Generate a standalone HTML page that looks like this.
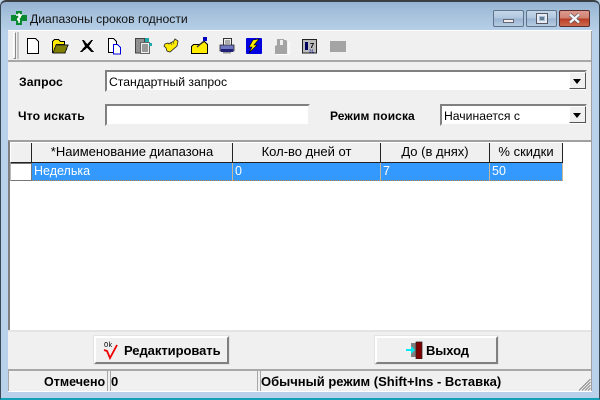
<!DOCTYPE html>
<html><head><meta charset="utf-8"><style>
html,body{margin:0;padding:0;background:#fff}
#w{position:relative;width:600px;height:400px;overflow:hidden;background:#b9d1ea;font-family:"Liberation Sans",sans-serif;font-size:13px;color:#000}
#w div,#w svg,#w span{position:absolute;box-sizing:border-box}
.t{white-space:nowrap;line-height:14px}
.b{font-weight:bold}
.sunk{background:#fff;border:2px solid;border-color:#808080 #f0f0f0 #f0f0f0 #808080}
.arr{background:#f0f0f0;border:1px solid;border-color:#fff #555 #555 #fff;width:17px;height:17px}
.arr:after{content:"";position:absolute;left:3px;top:6px;border:4px solid transparent;border-top:5px solid #000;border-bottom:0}
.hd{background:#f0f0f0;border-right:1px solid #222;border-bottom:1px solid #222;top:143px;height:20px;text-align:center;line-height:18px;white-space:nowrap}
.cell{top:163px;height:18px;background:#3399ff;color:#fff;font-size:12.500px;border-right:1px solid #c9b89a;border-bottom:1px dotted #c08040;line-height:17px;padding-left:2px;white-space:nowrap}
.btn{background:#f0f0f0;border:2px solid;border-color:#fff #808080 #808080 #fff;box-shadow:0 0 0 1px #e4e4e4}
</style></head><body><div id="w">
<div style="left:0;top:0;width:600px;height:400px;border:1px solid #3a4a54;border-bottom:2px solid #12a0b8;border-top:2px solid #3a3f44;border-radius:6px 6px 0 0;background:linear-gradient(#95b3d2 0,#a9c4de 15px,#b9d1ea 31px)"></div>
<svg style="left:9px;top:10px" width="20" height="16" viewBox="0 0 20 16"><path d="M7 1h6v4h5v6h-5v4H7v-4H2V5h5z" fill="#0a8a30"/><path d="M7 5h6M9 5c3 1 3 2 1 3s-2 2 1 3M10 3v10" stroke="#fff" stroke-width="1.400" fill="none"/></svg>
<div class="t" style="left:30px;top:12px;color:#111;font-size:12.200px">Диапазоны сроков годности</div>

<div style="left:493px;top:10px;width:31px;height:17px;border:1px solid #5f7388;border-radius:2px;background:linear-gradient(#c4d6e9 0,#afc6de 50%,#98b2cf 50%,#b6cce3 100%)"></div>
<div style="left:503px;top:19px;width:11px;height:4px;background:#eee;border:1px solid #667"></div>
<div style="left:526px;top:10px;width:31px;height:17px;border:1px solid #5f7388;border-radius:2px;background:linear-gradient(#c4d6e9 0,#afc6de 50%,#98b2cf 50%,#b6cce3 100%)"></div>
<div style="left:537px;top:14px;width:10px;height:9px;border:2px solid #e6ebf1;outline:1px solid #556;background:#667a90;box-shadow:inset 0 0 0 1px #a6bfd9"></div>
<div style="left:559px;top:10px;width:31px;height:17px;border:1px solid #5a2a2a;border-radius:2px;background:linear-gradient(#dc9a8e 0,#d0806f 50%,#b93a22 50%,#cc6a50 100%)"></div>
<svg style="left:568px;top:13px" width="13" height="11" viewBox="0 0 13 11"><path d="M2 1.500l9 8M11 1.500l-9 8" stroke="#556" stroke-width="3.600"/><path d="M2 1.500l9 8M11 1.500l-9 8" stroke="#f4f4f4" stroke-width="2.400"/></svg>

<div style="left:8px;top:30px;width:584px;height:362px;background:#f0f0f0"></div>
<div style="left:591px;top:30px;width:1px;height:362px;background:#a0a0a0"></div>
<div style="left:8px;top:30px;width:584px;height:1px;background:#fff"></div>
<div style="left:8px;top:60px;width:583px;height:2px;background:#a8a8a8"></div>
<div style="left:13px;top:32px;width:3px;height:27px;border:1px solid;border-color:#fff #888 #888 #fff"></div>
<div style="left:17px;top:32px;width:2px;height:27px;background:#c4c4c4"></div>

<svg style="left:24px;top:34px" width="325" height="24" viewBox="24 34 325 24" shape-rendering="crispEdges">
<path d="M27.500 38.500h8l3 3v12h-11z" fill="#fff" stroke="#000"/>
<path d="M52.500 52.500v-11l2-2h4l2 2h4v3h-8l-3 8z" fill="#ffec00" stroke="#000"/><path d="M53 53l3-8h12l-3 8z" fill="#808000" stroke="#222"/>
<path d="M82 40h2l3 4 4-4h2l-4 6 5 6h-3l-4-4-5 4h-2l5-6z" fill="#000"/>
<path d="M108.500 38.500h5l3 3v11h-8z" fill="#fff" stroke="#000"/><path d="M113.500 44.500h4l3 3v6.500h-7z" fill="#fff" stroke="#0000e0"/>
<path d="M135.500 38.500h9v14.500h-9z" fill="#909090" stroke="#444"/><path d="M140.500 42.500h9v11h-9z" fill="#eee" stroke="#666"/><path d="M142 45h6M142 47h6M142 49h6M142 51h6" stroke="#444"/><rect x="145" y="38" width="4" height="4" fill="#20a8a8"/><rect x="149" y="43" width="3" height="3" fill="#20a8a8"/>
</svg>
<svg style="left:160px;top:34px" width="190" height="24" viewBox="160 34 190 24">
<path d="M165 44l3-1 1 1 5-3 1-2 3 2-1 5-7 6-3-1-1-3-2-2z" fill="#ffec00" stroke="#222" stroke-width=".8"/><path d="M170 42l2 3M173 41l1 3" stroke="#554" stroke-width=".7"/>
<path d="M191.500 53.500v-7l2-2h6l5-3 3 3v9z" fill="#ffec00" stroke="#000"/><path d="M197 47l7-6" stroke="#333" stroke-width="1.400"/><rect x="203" y="37" width="4" height="4" fill="#0000c0"/>
<path d="M223.500 45v-6.500h8v6.500" fill="#eee" stroke="#333"/><path d="M225 41h5M225 43h5" stroke="#666"/><path d="M220 45h14v6h-14z" fill="#7078c0" stroke="#223" stroke-width=".8"/><rect x="221" y="49" width="12" height="3" fill="#202078"/><rect x="223" y="52" width="8" height="1.500" fill="#999"/>
<rect x="246" y="38" width="16" height="16" rx="1" fill="#0000e0"/><path d="M259 39l-6 1-4 7h3l-3 6 8-8h-3l5-6z" fill="#ffec00" stroke="#000" stroke-width=".6"/>
<path d="M275 54v-8l2-1v-6h7v1h2l1 1v13z" fill="#a4a4a4"/><path d="M280 40v5h3v-5" fill="#eee"/><path d="M276 54.500h13M289 54V41" stroke="#fff"/>
<rect x="302.500" y="39.500" width="14" height="13.500" fill="#bcbcbc" stroke="#222"/><rect x="305" y="42" width="3" height="8" fill="#000060"/><text x="310" y="48" font-size="7.500" font-family="Liberation Sans" font-weight="bold" fill="#000">7</text><text x="309" y="52.500" font-size="4.500" font-family="Liberation Sans" fill="#0000a0">31</text>
<rect x="330" y="41" width="16" height="11" fill="#a4a4a4"/>
</svg>

<div class="t b" style="left:19px;top:75px;letter-spacing:.1px;font-size:12.200px">Запрос</div>
<div class="sunk" style="left:105px;top:70px;width:482px;height:22px"></div>
<div class="t" style="left:109px;top:75px;font-size:12.200px">Стандартный запрос</div>
<div class="arr" style="left:569px;top:72px"></div>

<div class="t b" style="left:18px;top:109px;font-size:12.200px;letter-spacing:.1px">Что искать</div>
<div class="sunk" style="left:105px;top:104px;width:205px;height:22px"></div>
<div class="t b" style="left:330px;top:109px;font-size:12px;letter-spacing:.1px">Режим поиска</div>
<div class="sunk" style="left:440px;top:104px;width:147px;height:22px"></div>
<div class="t" style="left:444px;top:109px;font-size:12.200px">Начинается с</div>
<div class="arr" style="left:569px;top:106px"></div>

<div style="left:8px;top:140px;width:583px;height:191px;background:#fff;border-top:2px solid #a0a0a0;border-left:2px solid #808080"></div>
<div class="hd" style="left:10px;width:22px;border-left:1px solid #fff"></div>
<div class="hd" style="left:32px;width:201px">*Наименование диапазона</div>
<div class="hd" style="left:233px;width:148px">Кол-во дней от</div>
<div class="hd" style="left:381px;width:109px">До (в днях)</div>
<div class="hd" style="left:490px;width:73px">% скидки</div>
<div style="left:10px;top:163px;width:22px;height:18px;background:#fff;border:1px solid #777;border-left-color:#bbb"></div>
<div class="cell" style="left:32px;width:201px">Неделька</div>
<div class="cell" style="left:233px;width:148px">0</div>
<div class="cell" style="left:381px;width:109px">7</div>
<div class="cell" style="left:490px;width:73px">50</div>

<div style="left:8px;top:330px;width:583px;height:2px;background:#e4e4e4"></div>
<div class="btn" style="left:94px;top:336px;width:135px;height:28px"></div>
<svg style="left:103px;top:341px" width="17" height="20" viewBox="0 0 17 20"><text x="1" y="6" font-size="7" font-family="Liberation Mono" fill="#000">Ok</text><path d="M1 9l3 1 3 7 7-13" fill="none" stroke="#f00000" stroke-width="1.800"/></svg>
<div class="t b" style="left:124px;top:344px;font-size:13px;letter-spacing:-.05px">Редактировать</div>
<div class="btn" style="left:375px;top:336px;width:123px;height:28px"></div>
<svg style="left:405px;top:341px" width="18" height="18" viewBox="0 0 18 18"><path d="M6 2h11v14H6z" fill="#808080"/><path d="M11 1h6v17h-6z" fill="#800000" stroke="#222" stroke-width=".7"/><path d="M1 8h5V5l4 4-4 4v-3H1z" fill="#00e8f0"/></svg>
<div class="t b" style="left:426px;top:344px;font-size:13px;letter-spacing:-.1px">Выход</div>

<div style="left:8px;top:369px;width:583px;height:2px;background:#a8a8a8"></div>
<div style="left:8px;top:371px;width:1px;height:21px;background:#a8a8a8"></div>
<div style="left:107px;top:371px;width:1px;height:21px;background:#a8a8a8"></div>
<div style="left:110px;top:371px;width:1px;height:21px;background:#a8a8a8"></div>
<div style="left:257px;top:371px;width:1px;height:21px;background:#a8a8a8"></div>
<div style="left:260px;top:371px;width:1px;height:21px;background:#a8a8a8"></div>
<div style="left:8px;top:391px;width:584px;height:1px;background:#fff"></div>
<div class="t b" style="left:44px;top:375px;font-size:12.500px">Отмечено</div>
<div class="t b" style="left:111px;top:375px;font-size:13px">0</div>
<div class="t b" style="left:261px;top:375px;font-size:13px">Обычный режим (Shift+Ins - Вставка)</div>
<svg style="left:579px;top:379px" width="12" height="12" viewBox="0 0 12 12"><path d="M11.500 0L0 11.500M11.500 3L3 11.500M11.500 6L6 11.500M11.500 9L9 11.500" stroke="#909090" stroke-width="1.200"/></svg>
</div></body></html>
